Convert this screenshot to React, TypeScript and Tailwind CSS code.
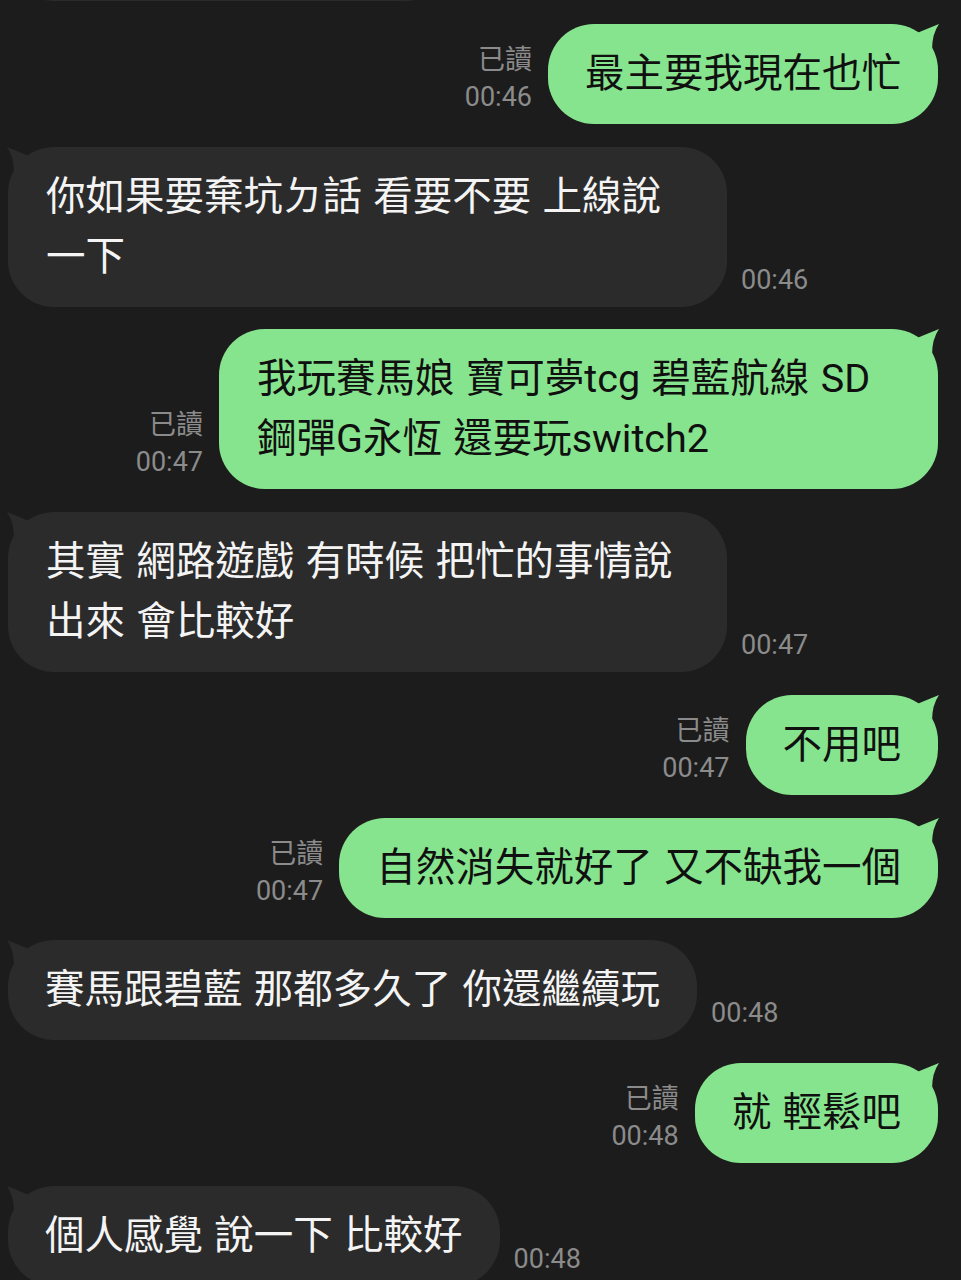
type Msg = {
  id: number;
  mine: boolean;
  lines: string[];
  time: string;
  wide?: boolean;
};

const MESSAGES: Msg[] = [
  { id: 1, mine: true, lines: ['最主要我現在也忙'], time: '00:46' },
  { id: 2, mine: false, lines: ['你如果要棄坑ㄉ話 看要不要 上線說', '一下'], time: '00:46', wide: true },
  { id: 3, mine: true, lines: ['我玩賽馬娘 寶可夢tcg 碧藍航線 SD', '鋼彈G永恆 還要玩switch2'], time: '00:47', wide: true },
  { id: 4, mine: false, lines: ['其實 網路遊戲 有時候 把忙的事情說', '出來 會比較好'], time: '00:47', wide: true },
  { id: 5, mine: true, lines: ['不用吧'], time: '00:47' },
  { id: 6, mine: true, lines: ['自然消失就好了 又不缺我一個'], time: '00:47' },
  { id: 7, mine: false, lines: ['賽馬跟碧藍 那都多久了 你還繼續玩'], time: '00:48' },
  { id: 8, mine: true, lines: ['就 輕鬆吧'], time: '00:48' },
  { id: 9, mine: false, lines: ['個人感覺 說一下 比較好'], time: '00:48' },
];

function Ear({ mine }: { mine: boolean }) {
  if (mine) {
    return (
      <svg width="32" height="32" viewBox="0 0 32 32" className="absolute top-0 right-[-2px]">
        <path d="M2 12 Q16 6 31 0 Q24 10 24 26 L2 26 Z" fill="#87e48e" />
      </svg>
    );
  }
  return (
    <svg width="32" height="32" viewBox="0 0 32 32" className="absolute top-0 left-[-2px]">
      <path d="M30 12 Q16 6 1 0 Q8 10 8 26 L30 26 Z" fill="#2b2b2b" />
    </svg>
  );
}

function Bubble({ msg }: { msg: Msg }) {
  return (
    <div
      className={`relative shrink-0 rounded-[46px] px-[37px] py-[20px] text-[39.5px] leading-[60px] [word-spacing:1.5px] whitespace-nowrap ${
        msg.mine ? 'bg-[#87e48e] text-[#101010]' : 'bg-[#2b2b2b] text-[#f4f4f4]'
      } ${msg.wide ? 'w-[719px] pl-[38px]' : ''}`}
    >
      <Ear mine={msg.mine} />
      <div className="relative">
        {msg.lines.map((line, i) => (
          <div key={i}>{line}</div>
        ))}
      </div>
    </div>
  );
}

export default function App() {
  return (
    <div className="w-[961px] h-[1280px] overflow-hidden bg-[#1c1c1c] font-['Roboto','Noto_Sans_CJK_TC',sans-serif]">
      <div className="flex flex-col gap-[22.75px]">
        {/* tail end of the previous message, scrolled off the top */}
        <div className="ml-[8px] mt-[-99px] h-[100px] w-[443px] shrink-0 rounded-[46px] bg-[#2b2b2b]" />

        {MESSAGES.map(msg =>
          msg.mine ? (
            <div key={msg.id} className="flex items-end justify-end pr-[23px]">
              <div className="mr-[16px] mb-[8px] text-right text-[27px] leading-[37px] text-[#8b8b8b]">
                <div>已讀</div>
                <div>{msg.time}</div>
              </div>
              <Bubble msg={msg} />
            </div>
          ) : (
            <div key={msg.id} className="flex items-end pl-[8px]">
              <Bubble msg={msg} />
              <div className="ml-[14px] mb-[8px] text-[27px] leading-[37px] text-[#8b8b8b]">{msg.time}</div>
            </div>
          )
        )}
      </div>
    </div>
  );
}
